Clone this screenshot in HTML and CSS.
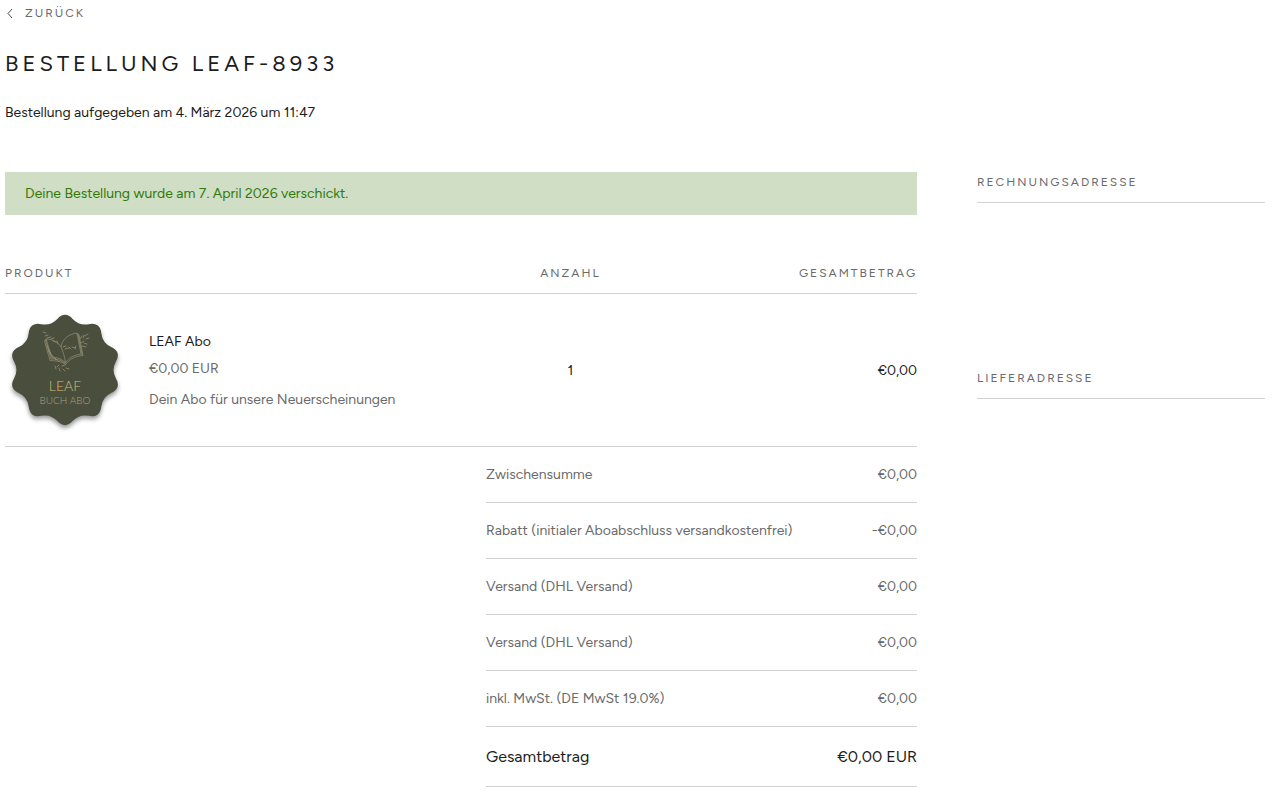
FILE: index.html
```html
<!DOCTYPE html>
<html lang="de">
<head>
    <meta charset="UTF-8">
    <meta name="viewport" content="width=device-width, initial-scale=1.0">
    <title>Bestellung LEAF-8933</title>
    <link rel="stylesheet" href="styles.css">
</head>
<body>
    <header class="page-header">
        <a class="back-link" href="#">
            <svg class="back-icon" viewBox="0 0 10 10" aria-hidden="true"><path d="M7 1 3 5.500 7 10"/></svg>
            Zurück
        </a>
        <h1>Bestellung LEAF-8933</h1>
        <p class="order-date">Bestellung aufgegeben am 4. März 2026 um 11:47</p>
    </header>

    <div class="order">
        <main class="order-main">
            <p class="banner">Deine Bestellung wurde am 7. April 2026 verschickt.</p>

            <table class="items">
                <thead>
                    <tr>
                        <th class="label col-product" scope="col">Produkt</th>
                        <th class="label col-qty" scope="col">Anzahl</th>
                        <th class="label col-total" scope="col">Gesamtbetrag</th>
                    </tr>
                </thead>
                <tbody>
                    <tr>
                        <td>
                            <div class="product">
                                <svg class="badge" viewBox="0 0 120 120" role="img" aria-label="LEAF Buch Abo">
                                    <path class="badge-shape" d="M53.1 9.6Q60 2 66.9 9.6Q73.9 17.2 84 15.2Q94.1 13.1 95.3 23.3Q96.4 33.5 105.8 37.8Q115.2 42.1 110.1 51Q105 60 110.1 69Q115.2 77.9 105.8 82.2Q96.4 86.5 95.3 96.7Q94.1 106.9 84 104.8Q73.9 102.8 66.9 110.4Q60 118 53.1 110.4Q46.1 102.8 36 104.8Q25.9 106.9 24.7 96.7Q23.6 86.5 14.2 82.2Q4.8 77.9 9.9 69Q15 60 9.9 51Q4.8 42.1 14.2 37.8Q23.6 33.5 24.7 23.3Q25.9 13.1 36 15.2Q46.1 17.2 53.1 9.6Z"/>
                                    <g class="badge-book">
                                        <path d="M41 29C47 29 53 32 56 37C57 29 64 24 72 23L76 44C69 45 63 48 60.500 53C56 48 51 47 47 48Z"/>
                                        <path d="M41 29 39.500 31 45 50.500C51 51 56 51 60.500 54.500C65 49 70 46 78 45.500L74 25 72 23M40.500 30 46 49C52 49 57 50 60.500 54M73 24 77 45M56 37C58 42 60 47 60.500 53M43 40C46 47 51 48 54 52M42 35C45 45 49 47 51 50"/>
                                    </g>
                                    <g class="badge-leaves">
                                        <path d="M38 22 41 23M40 26 43 25M42 28 46 27M46 29 49 28M48 31 51 32M52 31 53 34"/>
                                        <path d="M58 37 61 36M60 39 64 38M64 37 66 39M67 37 70 38M70 39 71 36"/>
                                        <path d="M75 29 77 26M78 28 79 25M80 26 83 24M81 29 84 28M76 33 79 31M79 33 82 34M77 36 81 37"/>
                                        <path d="M50 56 51 59M54 55 52 57M54 58 55 61M57 56 60 55M58 59 60 61M61 58 64 59"/>
                                    </g>
                                    <text class="badge-title" x="60" y="81">LEAF</text>
                                    <text class="badge-subtitle" x="60" y="94">BUCH ABO</text>
                                </svg>
                                <div class="product-info">
                                    <p class="product-name">LEAF Abo</p>
                                    <p class="product-price">€0,00 EUR</p>
                                    <p class="product-note">Dein Abo für unsere Neuerscheinungen</p>
                                </div>
                            </div>
                        </td>
                        <td class="col-qty">1</td>
                        <td class="col-total">€0,00</td>
                    </tr>
                </tbody>
            </table>

            <table class="totals">
                <tbody>
                    <tr><th scope="row">Zwischensumme</th><td>€0,00</td></tr>
                    <tr><th scope="row">Rabatt (initialer Aboabschluss versandkostenfrei)</th><td>-€0,00</td></tr>
                    <tr><th scope="row">Versand (DHL Versand)</th><td>€0,00</td></tr>
                    <tr><th scope="row">Versand (DHL Versand)</th><td>€0,00</td></tr>
                    <tr><th scope="row">inkl. MwSt. (DE MwSt 19.0%)</th><td>€0,00</td></tr>
                </tbody>
                <tfoot>
                    <tr><th scope="row">Gesamtbetrag</th><td>€0,00 EUR</td></tr>
                </tfoot>
            </table>
        </main>

        <aside class="addresses">
            <section class="address"><h2 class="label">Rechnungsadresse</h2></section>
            <section class="address"><h2 class="label">Lieferadresse</h2></section>
        </aside>
    </div>
</body>
</html>
```
FILE: styles.css
```css
* { box-sizing: border-box; }
body { margin: 0; padding: 0 7px 0 5px; font-family: Figtree, Lato, sans-serif; font-size: 14px; line-height: 23px; color: #1c1c1c; background: #fff; }
h1, h2, p { margin: 0; font-weight: 400; }
table { border-collapse: collapse; }
th, td { padding: 0; font-weight: 400; text-align: left; }

/* Header */
.back-link { display: inline-flex; align-items: center; gap: 10px; height: 26px; font-size: 12px; letter-spacing: 2px; text-transform: uppercase; text-decoration: none; color: #6a6a6a; }
.back-icon { width: 10px; height: 10px; overflow: visible; fill: none; stroke: #4a4a4a; stroke-width: 1; }
h1 { margin-top: 20px; font-size: 22px; line-height: 36px; letter-spacing: 4px; text-transform: uppercase; }
.order-date { margin-top: 19px; }

/* Columns */
.order { display: grid; grid-template-columns: minmax(0, 1fr) 288px; gap: 60px; margin-top: 48px; }
.label { font-size: 12px; line-height: 20px; letter-spacing: 2px; text-transform: uppercase; color: #6a6a6a; }
.banner { padding: 10px 20px; background: #cfdec5; color: #307a07; }

/* Line items */
.items { width: 100%; margin-top: 48px; table-layout: fixed; }
.items th { padding-bottom: 10px; }
.items tr { border-bottom: 1px solid #d2d2d2; }
.items td { padding: 16px 0; }
.items .col-product { width: 53%; }
.items .col-qty { width: 18%; text-align: center; }
.items .col-total { text-align: right; }
.product { display: flex; align-items: center; gap: 24px; }
.product-price { margin-top: 4px; color: #6a6a6a; }
.product-note { margin-top: 8px; color: #6a6a6a; }

/* Badge */
.badge { flex: none; width: 120px; height: 120px; overflow: visible; }
.badge-shape { fill: #4a4e3d; stroke: #4a4e3d; stroke-width: 2; filter: drop-shadow(0 3px 2px rgba(0, 0, 0, 0.4)); }
.badge-book { fill: none; stroke: #a29b7c; stroke-width: 0.6; }
.badge-leaves { fill: none; stroke: #969174; stroke-width: 0.8; stroke-linecap: round; }
.badge-title { font-family: Lato, sans-serif; font-size: 14px; font-weight: 300; text-anchor: middle; fill: #d5bd73; }
.badge-subtitle { font-family: Lato, sans-serif; font-size: 10px; font-weight: 300; text-anchor: middle; fill: #aaa181; }

/* Totals */
.totals { width: 431px; max-width: 100%; margin-left: auto; color: #6a6a6a; }
.totals tr { border-bottom: 1px solid #d2d2d2; }
.totals th, .totals td { padding: 16px 0; }
.totals td { text-align: right; }
.totals tfoot { font-size: 16px; line-height: 27px; color: #1c1c1c; }

/* Addresses */
.address { min-height: 196px; }
.address h2 { padding-bottom: 10px; border-bottom: 1px solid #d2d2d2; }
```
